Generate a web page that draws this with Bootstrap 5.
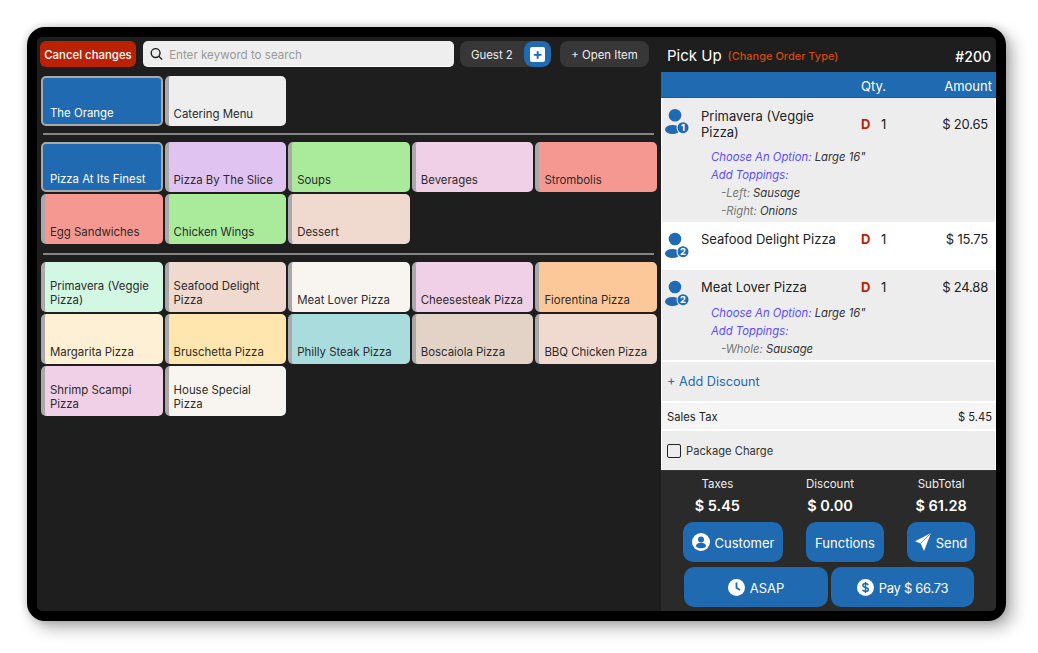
<!DOCTYPE html>
<html lang="en">
<head>
    <meta charset="UTF-8">
    <meta name="viewport" content="width=device-width, initial-scale=1.0">
    <link href="https://cdn.jsdelivr.net/npm/bootstrap@5.3.0/dist/css/bootstrap.min.css" rel="stylesheet">
    <title>POS</title>
    <style>
        html, body { height: 100%; overflow: hidden; }
        body { background: #fff; font-family: Inter, "Liberation Sans", sans-serif; padding: 27px 32px 32px 27px; }
        .tablet { width: 979px; height: 594px; border: 10px solid #000; border-radius: 18px; box-shadow: 7px 7px 16px rgba(0,0,0,.3), 0 0 9px rgba(0,0,0,.2); background: #000; }
        .screen { height: 100%; border-radius: 5px; overflow: hidden; background: #1e1e1e; }
        .left-side { width: 624px; padding: 4px 4px 0 3px; }
        .right-side { width: 335px; }
        .top-bar { height: 26px; gap: 7px; margin-bottom: 9px; }
        .btn-cancel { width: 96px; height: 26px; background: #bb2204; color: #fff; font-size: 11.4px; font-weight: 500; border: 0; border-radius: 6px; padding: 3px 0 0; }
        .search-box { width: 311px; height: 26px; background: #eee; border-radius: 5px; padding-left: 7px; gap: 6px; border-bottom: 1px solid #fff; }
        .search-box input { border: 0; background: transparent; font-size: 11.6px; padding: 2px 0 0; height: 24px; box-shadow: none; }
        .search-box input::placeholder { color: #999; }
        .guest-pill { width: 91px; height: 26px; background: #373737; color: #eee; font-size: 11.4px; border-radius: 8px; padding-left: 11px; margin-left: -1px; }
        .guest-name { padding-top: 3px; }
        .plus-wrap { width: 27px; height: 26px; background: #1f6ab0; border-radius: 9px; }
        .plus-inner { width: 15px; height: 15px; background: #fff; color: #1f6ab0; border-radius: 2px; font-size: 15px; font-weight: 700; line-height: 14px; text-align: center; }
        .btn-open { width: 89px; height: 26px; background: #373737; color: #eee; font-size: 11.4px; border-radius: 8px; border: 0; padding: 3px 0 0; margin-left: 2px; }
        .tile-grid { display: grid; grid-template-columns: repeat(5, 121.6px); grid-auto-rows: 50px; gap: 2px; margin-left: 1px; }
        .tile { border-radius: 5px; border-left: 4px solid #a9a9a9; padding: 0 6px 5px 5px; font-size: 11.4px; line-height: 14px; color: #2b2b2b; display: flex; align-items: flex-end; }
        .tile-on { background: #1f6ab0; color: #fff; border: 2px solid #a9a9a9; padding: 0 6px 4px 7px; }
        .tile-line { height: 2px; background: #858585; margin: 7px 3px 7px 3px; opacity: 1; border: 0; }
        .tile-line-low { margin-top: 9px; }
        .order-head { height: 35px; padding: 3px 5px 0 6px; color: #fff; }
        .pick-title { font-size: 15px; }
        .change-link { font-size: 11px; font-weight: 500; color: #d6480f; margin-left: 6px; }
        .order-no { font-size: 14px; font-weight: 500; }
        .col-bar { height: 26px; background: #1f6ab0; color: #fff; font-size: 13px; padding: 4px 4px 0 0; border-bottom: 1px solid #185a98; }
        .qty-head { margin-left: 200px; width: 72px; }
        .amount-head { width: 59px; text-align: right; }
        .order-row { background: #ededed; padding: 0 0 0 3px; border-left: 1px solid #fff; border-right: 1px solid #fff; font-size: 13px; color: #222; }
        .order-row.row-white { background: #fff; }
        .row-a { height: 124px; }
        .row-b { height: 48px; }
        .row-c { height: 90px; }
        .main-line { display: flex; align-items: flex-start; }
        .who { width: 36px; flex: none; padding-top: 9px; }
        .who svg { display: block; }
        .who-name { width: 160px; flex: none; padding: 10px 20px 0 0; line-height: 16px; }
        .who-d { width: 20px; flex: none; padding-top: 18px; color: #bb2204; font-weight: 700; line-height: 16px; }
        .who-qty { width: 30px; flex: none; padding-top: 18px; line-height: 16px; }
        .who-amt { width: 77px; flex: none; padding-top: 18px; text-align: right; line-height: 16px; letter-spacing: -.2px; }
        .row-b .who-name, .row-b .who-d, .row-b .who-qty, .row-b .who-amt, .row-c .who-name, .row-c .who-d, .row-c .who-qty, .row-c .who-amt { padding-top: 9px; }
        .mods { padding-left: 46px; font-size: 11.3px; font-style: italic; line-height: 18px; color: #333; }
        .mod-blue { color: #5a4cff; }
        .mod-gray { color: #777; }
        .mod-sub { padding-left: 10px; }
        .mods-a { margin-top: 8px; }
        .mods-c { margin-top: -3px; }
        .add-disc { height: 39px; margin-top: 2px; background: #ededed; color: #1f6ab0; font-size: 12.7px; padding: 1px 0 0 5px; border-left: 1px solid #fff; border-right: 1px solid #fff; }
        .tax-row { height: 26px; margin-top: 2px; background: #f5f5f5; color: #222; font-size: 11.2px; padding: 2px 4px 0 6px; }
        .pack-row { height: 39px; margin-top: 2px; background: #ededed; color: #333; font-size: 11.2px; padding-left: 5px; gap: 5px; border-left: 1px solid #fff; border-right: 1px solid #fff; }
        .pack-box { width: 14px; height: 14px; border: 1.5px solid #222; border-radius: 2px; background: transparent; }
        .pack-text { padding-top: 2px; }
        .white-sep { background: #fff; }
        .totals { flex: 1; background: #2a2a2a; color: #eee; padding: 8px 0 0 0; border-top: 1px solid #333; }
        .total-cell { text-align: center; line-height: 1; }
        .total-label { font-size: 11.5px; margin-bottom: 8px; }
        .total-value { font-size: 14.5px; font-weight: 600; color: #fff; }
        .cell-a { width: 113px; }
        .cell-b { width: 113px; }
        .cell-c { width: 110px; }
        .action-btn { background: #1f6ab0; color: #fff; border: 0; border-radius: 10px; font-size: 13px; padding: 3px 0 0; height: 40px; gap: 5px; }
        .action-btn svg { margin-top: -3px; }
        .action-row { margin-top: 9px; }
        .btn-customer { width: 100px; margin-left: 22px; }
        .btn-functions { width: 78px; margin-left: 23px; }
        .btn-send { width: 68px; margin-left: 23px; }
        .btn-asap { width: 144px; margin-left: 23px; }
        .btn-pay { width: 143px; margin-left: 3px; letter-spacing: -.3px; }
        .action-row-2 { margin-top: 5px; }
    </style>
</head>
<body>
    <div class="tablet">
        <div class="screen d-flex">
            <div class="left-side">
                <div class="top-bar d-flex align-items-center">
                    <button class="btn btn-cancel" type="button">Cancel changes</button>
                    <div class="search-box d-flex align-items-center">
                        <svg width="14" height="14" viewBox="0 0 14 14" fill="none" stroke="#222" stroke-width="1.5"><circle cx="6" cy="6" r="4.7"/><path d="M9.4 9.4 13 13"/></svg>
                        <input class="form-control" type="text" placeholder="Enter keyword to search">
                    </div>
                    <div class="guest-pill d-flex align-items-center justify-content-between">
                        <span class="guest-name">Guest 2</span>
                        <span class="plus-wrap d-flex align-items-center justify-content-center"><span class="plus-inner">+</span></span>
                    </div>
                    <button class="btn btn-open" type="button">+ Open Item</button>
                </div>

                <div class="tile-grid">
                    <div class="tile tile-on">The Orange</div>
                    <div class="tile" style="background:#eeeeee">Catering Menu</div>
                </div>
                <hr class="tile-line">
                <div class="tile-grid">
                    <div class="tile tile-on">Pizza At Its Finest</div>
                    <div class="tile" style="background:#e0c3f0">Pizza By The Slice</div>
                    <div class="tile" style="background:#a9ea9b">Soups</div>
                    <div class="tile" style="background:#f0d0e6">Beverages</div>
                    <div class="tile" style="background:#f59891">Strombolis</div>
                    <div class="tile" style="background:#f59891">Egg Sandwiches</div>
                    <div class="tile" style="background:#a9ea9b">Chicken Wings</div>
                    <div class="tile" style="background:#f0d9cf">Dessert</div>
                </div>
                <hr class="tile-line tile-line-low">
                <div class="tile-grid">
                    <div class="tile" style="background:#d2f7e3">Primavera (Veggie Pizza)</div>
                    <div class="tile" style="background:#f0d9cf">Seafood Delight Pizza</div>
                    <div class="tile" style="background:#f8f5f1">Meat Lover Pizza</div>
                    <div class="tile" style="background:#f0d0e6">Cheesesteak Pizza</div>
                    <div class="tile" style="background:#fdc899">Fiorentina Pizza</div>
                    <div class="tile" style="background:#fdf0d5">Margarita Pizza</div>
                    <div class="tile" style="background:#ffe6ae">Bruschetta Pizza</div>
                    <div class="tile" style="background:#a9dcdd">Philly Steak Pizza</div>
                    <div class="tile" style="background:#e3d3c6">Boscaiola Pizza</div>
                    <div class="tile" style="background:#f0d9cf">BBQ Chicken Pizza</div>
                    <div class="tile" style="background:#f0d0e6">Shrimp Scampi Pizza</div>
                    <div class="tile" style="background:#f8f5f1">House Special Pizza</div>
                </div>
            </div>

            <div class="right-side d-flex flex-column">
                <div class="order-head d-flex align-items-center">
                    <span class="pick-title">Pick Up</span>
                    <span class="change-link">(Change Order Type)</span>
                    <span class="order-no ms-auto">#200</span>
                </div>
                <div class="col-bar d-flex align-items-center">
                    <span class="qty-head">Qty.</span>
                    <span class="amount-head ms-auto">Amount</span>
                </div>

                <div class="order-row row-a">
                    <div class="main-line">
                        <div class="who"><svg width="25" height="28" viewBox="0 0 25 28"><circle cx="10" cy="8.300" r="6.300" fill="#1f6ab0"/><ellipse cx="7.500" cy="22.500" rx="7.500" ry="4.500" fill="#1f6ab0"/><circle cx="18" cy="20.700" r="6.500" fill="#ededed"/><circle cx="18" cy="20.700" r="5.500" fill="#1f6ab0"/><text x="18" y="24" text-anchor="middle" font-size="9.500" font-weight="700" fill="#fff" font-family="Inter, sans-serif">1</text></svg></div>
                        <div class="who-name">Primavera (Veggie Pizza)</div>
                        <div class="who-d">D</div>
                        <div class="who-qty">1</div>
                        <div class="who-amt">$ 20.65</div>
                    </div>
                    <div class="mods mods-a">
                        <div><span class="mod-blue">Choose An Option:</span> Large 16"</div>
                        <div class="mod-blue">Add Toppings:</div>
                        <div class="mod-sub"><span class="mod-gray">-Left:</span> Sausage</div>
                        <div class="mod-sub"><span class="mod-gray">-Right:</span> Onions</div>
                    </div>
                </div>

                <div class="order-row row-b row-white">
                    <div class="main-line">
                        <div class="who"><svg width="25" height="28" viewBox="0 0 25 28"><circle cx="10" cy="8" r="6.300" fill="#1f6ab0"/><ellipse cx="7.500" cy="22.500" rx="7.500" ry="4.500" fill="#1f6ab0"/><circle cx="18" cy="20.700" r="6.500" fill="#fff"/><circle cx="18" cy="20.700" r="5.500" fill="#1f6ab0"/><text x="18" y="24" text-anchor="middle" font-size="9.500" font-weight="700" fill="#fff" font-family="Inter, sans-serif">2</text></svg></div>
                        <div class="who-name">Seafood Delight Pizza</div>
                        <div class="who-d">D</div>
                        <div class="who-qty">1</div>
                        <div class="who-amt">$ 15.75</div>
                    </div>
                </div>

                <div class="order-row row-c">
                    <div class="main-line">
                        <div class="who"><svg width="25" height="28" viewBox="0 0 25 28"><circle cx="10" cy="8" r="6.300" fill="#1f6ab0"/><ellipse cx="7.500" cy="22.500" rx="7.500" ry="4.500" fill="#1f6ab0"/><circle cx="18" cy="20.700" r="6.500" fill="#ededed"/><circle cx="18" cy="20.700" r="5.500" fill="#1f6ab0"/><text x="18" y="24" text-anchor="middle" font-size="9.500" font-weight="700" fill="#fff" font-family="Inter, sans-serif">2</text></svg></div>
                        <div class="who-name">Meat Lover Pizza</div>
                        <div class="who-d">D</div>
                        <div class="who-qty">1</div>
                        <div class="who-amt">$ 24.88</div>
                    </div>
                    <div class="mods mods-c">
                        <div><span class="mod-blue">Choose An Option:</span> Large 16"</div>
                        <div class="mod-blue">Add Toppings:</div>
                        <div class="mod-sub"><span class="mod-gray">-Whole:</span> Sausage</div>
                    </div>
                </div>

                <div class="white-sep">
                    <div class="add-disc d-flex align-items-center">+ Add Discount</div>
                    <div class="tax-row d-flex align-items-center justify-content-between"><span>Sales Tax</span><span>$ 5.45</span></div>
                    <div class="pack-row d-flex align-items-center"><span class="pack-box"></span><span class="pack-text">Package Charge</span></div>
                </div>

                <div class="totals">
                    <div class="d-flex">
                        <div class="total-cell cell-a"><div class="total-label">Taxes</div><div class="total-value">$ 5.45</div></div>
                        <div class="total-cell cell-b"><div class="total-label">Discount</div><div class="total-value">$ 0.00</div></div>
                        <div class="total-cell cell-c"><div class="total-label">SubTotal</div><div class="total-value">$ 61.28</div></div>
                    </div>
                    <div class="d-flex action-row">
                        <button class="btn action-btn btn-customer d-flex align-items-center justify-content-center" type="button">
                            <svg width="18" height="18" viewBox="0 0 18 18"><circle cx="9" cy="9" r="9" fill="#fff"/><circle cx="9" cy="6.600" r="3" fill="#1f6ab0"/><path d="M3.800 13.200c.6-2.400 2.600-3.400 5.200-3.400s4.600 1 5.200 3.400C13 14.600 11 15.200 9 15.200s-4-.6-5.200-2z" fill="#1f6ab0"/></svg>
                            Customer
                        </button>
                        <button class="btn action-btn btn-functions" type="button">Functions</button>
                        <button class="btn action-btn btn-send d-flex align-items-center justify-content-center" type="button">
                            <svg width="16" height="18" viewBox="0 0 16 18"><path d="M16 0 0 8.200l5.600 2.300L9 18z" fill="#fff"/><path d="M16 0 5.600 10.500" stroke="#1f6ab0" stroke-width=".7"/></svg>
                            Send
                        </button>
                    </div>
                    <div class="d-flex action-row-2">
                        <button class="btn action-btn btn-asap d-flex align-items-center justify-content-center" type="button">
                            <svg width="17" height="17" viewBox="0 0 17 17"><circle cx="8.500" cy="8.500" r="8.500" fill="#fff"/><path d="M8.500 3.600v5.200l3.400 2.200" fill="none" stroke="#1f6ab0" stroke-width="1.800"/></svg>
                            ASAP
                        </button>
                        <button class="btn action-btn btn-pay d-flex align-items-center justify-content-center" type="button">
                            <svg width="17" height="17" viewBox="0 0 17 17"><circle cx="8.500" cy="8.500" r="8.500" fill="#fff"/><path d="M11.200 6.100c-.4-1-1.400-1.500-2.700-1.500-1.500 0-2.600.7-2.600 1.900 0 2.600 5.400 1.300 5.400 4 0 1.200-1.200 1.900-2.800 1.900-1.400 0-2.500-.6-2.900-1.600M8.500 3v11" fill="none" stroke="#1f6ab0" stroke-width="1.500"/></svg>
                            Pay $ 66.73
                        </button>
                    </div>
                </div>
            </div>
        </div>
    </div>
    <script src="https://cdn.jsdelivr.net/npm/bootstrap@5.3.0/dist/js/bootstrap.bundle.min.js"></script>
</body>
</html>
